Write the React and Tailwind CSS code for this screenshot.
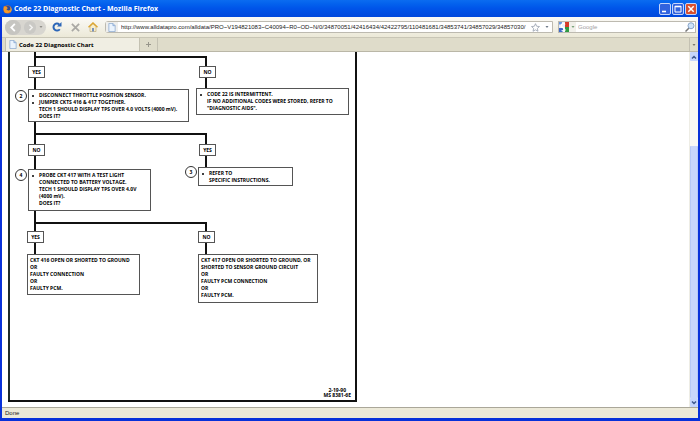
const url =
    'http://www.alldatapro.com/alldata/PRO~V194821083~C40094~R0~OD~N/0/34870051/42416434/42422795/110481681/34853741/34857029/34857030/';

// Answers hanging off the connector lines
const answers = [
    { text: 'YES', pos: 'left-[20px] top-[14px]' },
    { text: 'NO', pos: 'left-[191px] top-[14px]' },
    { text: 'NO', pos: 'left-[20px] top-[92px]' },
    { text: 'YES', pos: 'left-[191px] top-[92px]' },
    { text: 'YES', pos: 'left-[19px] top-[179px]' },
    { text: 'NO', pos: 'left-[190px] top-[179px]' },
];

const steps = [
    {
        number: 2,
        numberPos: 'left-[7px] top-[38px]',
        pos: 'left-[20px] top-[37px] w-[161px] h-[33px]',
        items: [
            ['DISCONNECT THROTTLE POSITION SENSOR.'],
            ['JUMPER CKTS 416 & 417 TOGETHER.', 'TECH 1 SHOULD DISPLAY TPS OVER 4.0 VOLTS (4000 mV).', 'DOES IT?'],
        ],
    },
    {
        pos: 'left-[188px] top-[36px] w-[153px] h-[27px]',
        items: [['CODE 22 IS INTERMITTENT.', 'IF NO ADDITIONAL CODES WERE STORED, REFER TO', '"DIAGNOSTIC AIDS".']],
    },
    {
        number: 4,
        numberPos: 'left-[7px] top-[117px]',
        pos: 'left-[20px] top-[117px] w-[123px] h-[42px]',
        items: [
            [
                'PROBE CKT 417 WITH A TEST LIGHT',
                'CONNECTED TO BATTERY VOLTAGE.',
                'TECH 1 SHOULD DISPLAY TPS OVER 4.0V',
                '(4000 mV).',
                'DOES IT?',
            ],
        ],
    },
    {
        number: 3,
        numberPos: 'left-[177px] top-[114px]',
        pos: 'left-[190px] top-[115px] w-[95px] h-[19px]',
        items: [['REFER TO', 'SPECIFIC INSTRUCTIONS.']],
    },
];

const results = [
    {
        pos: 'left-[19px] top-[202px] w-[113px] h-[41px]',
        lines: ['CKT 416 OPEN OR SHORTED TO GROUND', 'OR', 'FAULTY CONNECTION', 'OR', 'FAULTY PCM.'],
    },
    {
        pos: 'left-[190px] top-[202px] w-[120px] h-[49px]',
        lines: [
            'CKT 417 OPEN OR SHORTED TO GROUND, OR',
            'SHORTED TO SENSOR GROUND CIRCUIT',
            'OR',
            'FAULTY PCM CONNECTION',
            'OR',
            'FAULTY PCM.',
        ],
    },
];

function PageIcon() {
    return (
        <svg viewBox="0 0 16 20" className="h-[9px] w-[8px] shrink-0">
            <path d="M1 1h9l5 5v13H1z" fill="#eaf3fd" stroke="#7d9fcb" strokeWidth="1.5" />
            <path d="M10 1v5h5" fill="#bcd3ef" stroke="#7d9fcb" strokeWidth="1.5" />
        </svg>
    );
}

function FirefoxIcon() {
    return (
        <svg viewBox="0 0 20 20" className="h-[9px] w-[9px] shrink-0">
            <circle cx="10" cy="10" r="9" fill="#e8731a" />
            <circle cx="11" cy="8" r="6" fill="#27479b" />
            <path d="M2 2c2 2 3 2 6 2l3 3-3 2c1 4 6 4 9 1-1 6-5 8-9 8-5-1-8-6-6-16z" fill="#f39a2b" />
            <path d="M16 4c4 4 4 10 0 13 1-3 2-8 0-13z" fill="#f7cf4b" />
        </svg>
    );
}

function TitleBar() {
    const button = 'flex h-[12px] w-[12px] items-center justify-center rounded-[2px] border border-[#c5d5fa]';

    return (
        <header className="flex h-[17px] shrink-0 items-center gap-[2px] bg-linear-to-b from-[#0b6cf0] via-[#0054e9] to-[#0048dc] px-[3px] pt-px">
            <FirefoxIcon />
            <h1 className="flex-1 truncate font-['Open_Sans','Noto_Sans',sans-serif] text-[7px] leading-[10px] font-bold text-white">
                Code 22 Diagnostic Chart - Mozilla Firefox
            </h1>
            <div className="flex gap-px">
                <button aria-label="Minimize" className={`${button} bg-[#3163de]`}>
                    <svg viewBox="0 0 10 10" className="h-[10px] w-[10px]">
                        <path d="M2 7.5h4" stroke="#fff" strokeWidth="1.6" />
                    </svg>
                </button>
                <button aria-label="Maximize" className={`${button} bg-[#3163de]`}>
                    <svg viewBox="0 0 10 10" className="h-[10px] w-[10px]" fill="none" stroke="#fff">
                        <path d="M2 2.5h6M2 8h6M2 2v6M8 2v6" />
                        <path d="M2 2.5h6" strokeWidth="1.6" />
                    </svg>
                </button>
                <button aria-label="Close" className={`${button} bg-[#d8502e]`}>
                    <svg viewBox="0 0 10 10" className="h-[10px] w-[10px]">
                        <path d="M2.3 2.3l5.4 5.4M7.7 2.3L2.3 7.7" stroke="#fff" strokeWidth="1.5" />
                    </svg>
                </button>
            </div>
        </header>
    );
}

function Caret() {
    return (
        <svg viewBox="0 0 6 4" className="h-[2px] w-[4px]">
            <path d="M0 0h6L3 4z" fill="currentColor" />
        </svg>
    );
}

function NavBar() {
    return (
        <nav className="flex h-[20px] shrink-0 items-center bg-linear-to-b from-[#fbfaf7] to-[#ece9d8] pr-[2px] pl-[3px]">
            <div className="flex h-[15px] w-[41px] items-center justify-between rounded-full bg-[#d8d6d0] pr-[3px]">
                <button aria-label="Back" className="flex h-[15px] w-[16px] items-center justify-center rounded-full bg-[#c6c5c1]">
                    <svg viewBox="0 0 10 10" className="h-[9px] w-[9px]" fill="none" stroke="#fff" strokeWidth="2">
                        <path d="M6.5 1L2.5 5l4 4" />
                    </svg>
                </button>
                <button aria-label="Forward" className="flex h-[13px] w-[12px] items-center justify-center rounded-full bg-[#cac9c5]">
                    <svg viewBox="0 0 10 10" className="h-[7px] w-[7px]" fill="none" stroke="#f4f4f2" strokeWidth="2">
                        <path d="M3.5 1l4 4-4 4" />
                    </svg>
                </button>
                <button aria-label="Recent pages" className="text-[#8e8d88]">
                    <Caret />
                </button>
            </div>
            <button aria-label="Reload" className="ml-[6px]">
                <svg viewBox="0 0 20 20" className="h-[10px] w-[10px]" fill="none">
                    <path d="M15.5 14.5A7 7 0 1 1 14.5 4.8" stroke="#2c66b8" strokeWidth="4" />
                    <path d="M19 0v9h-9z" fill="#2c66b8" />
                </svg>
            </button>
            <button aria-label="Stop" className="ml-[9px]">
                <svg viewBox="0 0 10 10" className="h-[9px] w-[9px]">
                    <path d="M1 1l8 8M9 1L1 9" stroke="#aaa9a5" strokeWidth="2" />
                </svg>
            </button>
            <button aria-label="Home" className="ml-[8px]">
                <svg viewBox="0 0 20 20" className="h-[10px] w-[10px]">
                    <path d="M4 9v10h12V9l-6-6z" fill="#f8eecb" stroke="#a9925a" />
                    <path d="M1 10.5l9-8.5 9 8.5" fill="none" stroke="#dca633" strokeWidth="3" />
                    <path d="M8 12h4v7H8z" fill="#7892bf" />
                </svg>
            </button>
            <div className="ml-[7px] flex h-[12px] min-w-0 flex-1 items-center rounded-l-[3px] border border-[#bdbab0] bg-white pr-[3px]">
                <span className="flex h-full w-[12px] shrink-0 items-center justify-center bg-[#eeeeec]">
                    <PageIcon />
                </span>
                <input
                    aria-label="Location"
                    defaultValue={url}
                    className="ml-[3px] h-[10px] min-w-0 flex-1 font-['Liberation_Sans',sans-serif] text-[6px] leading-[10px] text-[#222] outline-none"
                />
                <button aria-label="Bookmark this page" className="ml-[2px]">
                    <svg viewBox="0 0 20 20" className="h-[9px] w-[9px]">
                        <path
                            d="M10 1.5l2.6 5.7 6.2.7-4.6 4.2 1.3 6.2L10 15.2l-5.5 3.1 1.3-6.2L1.2 7.9l6.2-.7z"
                            fill="#fff"
                            stroke="#8b95a5"
                            strokeWidth="1.6"
                        />
                    </svg>
                </button>
                <button aria-label="Show history" className="ml-[5px] text-[#6d7888]">
                    <Caret />
                </button>
            </div>
            <form className="ml-[5px] flex h-[12px] w-[138px] shrink-0 items-center border border-[#bdbab0] bg-white">
                <button type="button" aria-label="Search engine" className="flex h-full w-[17px] items-center gap-[2px] bg-[#f1f0ea] text-[#7aa27a]">
                    <svg viewBox="0 0 20 20" className="h-[10px] w-[10px]">
                        <path d="M0 0h12v20H0z" fill="#e8effc" />
                        <path d="M12 0h8v10h-8z" fill="#d63a2b" />
                        <path d="M12 10h8v10h-8z" fill="#2f9a43" />
                        <path d="M0 12h8v8H0z" fill="#3c69c9" />
                        <path d="M0 0h6v5H0z" fill="#6a97e0" />
                        <path d="M12 5a4 4 0 1 0-3 6c-2 3 3 2 3 5s-6 3-6 0" fill="none" stroke="#fff" strokeWidth="2.5" />
                    </svg>
                    <Caret />
                </button>
                <input
                    aria-label="Search"
                    placeholder="Google"
                    className="ml-[2px] h-[10px] min-w-0 flex-1 font-['Liberation_Sans',sans-serif] text-[6px] leading-[10px] outline-none placeholder:text-[#a3a3a3]"
                />
                <button type="button" aria-label="Go">
                    <svg viewBox="0 0 20 20" className="h-[10px] w-[10px]">
                        <path d="M8 12l-7 7" stroke="#777" strokeWidth="3" />
                        <circle cx="12" cy="7.5" r="6" fill="#cfe3f8" stroke="#89a5c8" strokeWidth="2" />
                    </svg>
                </button>
            </form>
        </nav>
    );
}

function TabBar() {
    return (
        <div className="flex h-[15px] shrink-0 border-t border-b border-t-[#c9c6b6] border-b-[#bab7a7] bg-[#dfdcca] pl-[3px]">
            <button className="flex w-[135px] items-center gap-[2px] border-x border-[#c4c1b2] bg-[#f0eee3] px-[3px]">
                <PageIcon />
                <span className="font-['Open_Sans','Noto_Sans',sans-serif] text-[6px] leading-[10px] font-bold whitespace-nowrap text-black">
                    Code 22 Diagnostic Chart
                </span>
            </button>
            <button aria-label="Open a new tab" className="flex w-[18px] items-center justify-center border-r border-[#c4c1b2]">
                <svg viewBox="0 0 5 5" className="h-[5px] w-[5px]">
                    <path d="M2.5 0v5M0 2.5h5" stroke="#98968b" />
                </svg>
            </button>
            <button aria-label="List all tabs" className="ml-auto flex w-[9px] items-center justify-center border-l border-[#c4c1b2] text-[#77756b]">
                <Caret />
            </button>
        </div>
    );
}

function Chart() {
    return (
        <figure className="relative ml-[6px] h-[350px] w-[349px] shrink-0 font-['Open_Sans','Noto_Sans',sans-serif] text-[5px] leading-[7px] font-bold whitespace-nowrap text-black">
            <svg viewBox="0 0 349 350" className="block h-full w-full" fill="none" stroke="#111" strokeWidth="2">
                <path d="M1 0v349" stroke="#1c2a2a" />
                <path d="M0 349h349M348 350V0" />
                <path d="M27 0v205M26 5h172v32" />
                <path d="M26 82h172v34M26 171h172v32" />
            </svg>

            {answers.map(answer => (
                <div
                    key={answer.pos}
                    className={`absolute flex h-[12px] w-[17px] items-center justify-center border border-[#555] bg-white ${answer.pos}`}
                >
                    {answer.text}
                </div>
            ))}

            {steps.map(step => (
                <div key={step.pos}>
                    {step.number && (
                        <span
                            className={`absolute flex h-[12px] w-[12px] items-center justify-center rounded-full border border-[#333] bg-white ${step.numberPos}`}
                        >
                            {step.number}
                        </span>
                    )}
                    <ul className={`absolute border border-[#555] bg-white pt-[2px] pl-[3px] ${step.pos}`}>
                        {step.items.map(lines => (
                            <li key={lines[0]} className="flex gap-[5px]">
                                <span className="mt-[3px] h-[2px] w-[2px] shrink-0 rounded-full bg-black" />
                                <div>
                                    {lines.map(line => (
                                        <p key={line}>{line}</p>
                                    ))}
                                </div>
                            </li>
                        ))}
                    </ul>
                </div>
            ))}

            {results.map(result => (
                <div key={result.pos} className={`absolute border border-[#555] bg-white pt-[2px] pl-[2px] ${result.pos}`}>
                    {result.lines.map((line, i) => (
                        <p key={i}>{line}</p>
                    ))}
                </div>
            ))}

            <figcaption className="absolute right-[6px] bottom-[4px] text-center leading-[5px]">
                <p>2-19-90</p>
                <p>MS 8381-6E</p>
            </figcaption>
        </figure>
    );
}

function ScrollBar() {
    const arrow = 'flex h-[9px] shrink-0 items-center justify-center rounded-[1px] bg-[#c6d5fb]';

    return (
        <div className="flex w-[9px] shrink-0 flex-col border-l border-[#eeede5] bg-[#f8f8f4]">
            <button aria-label="Scroll up" className={arrow}>
                <svg viewBox="0 0 6 4" className="h-[4px] w-[6px]">
                    <path d="M1 3.5l2-2 2 2" fill="none" stroke="#405a90" strokeWidth="1.5" />
                </svg>
            </button>
            <div className="basis-[85px]" />
            <div className="flex-1 rounded-[1px] border-x border-[#b6c8f5] bg-[#c8d6fb]" />
            <button aria-label="Scroll down" className={arrow}>
                <svg viewBox="0 0 6 4" className="h-[4px] w-[6px]">
                    <path d="M1 .5l2 2 2-2" fill="none" stroke="#405a90" strokeWidth="1.5" />
                </svg>
            </button>
        </div>
    );
}

export default function App() {
    return (
        <div className="flex h-screen flex-col bg-[#0831d9]">
            <TitleBar />
            <div className="mx-[2px] mb-[3px] flex min-h-0 flex-1 flex-col bg-white">
                <NavBar />
                <TabBar />
                <main className="flex min-h-0 flex-1 justify-between overflow-hidden">
                    <Chart />
                    <ScrollBar />
                </main>
                <footer className="h-[11px] shrink-0 border-t border-[#aaa799] bg-[#ece9d8] px-[3px] font-['Liberation_Sans',sans-serif] text-[6px] leading-[10px] text-[#222]">
                    Done
                </footer>
            </div>
        </div>
    );
}
